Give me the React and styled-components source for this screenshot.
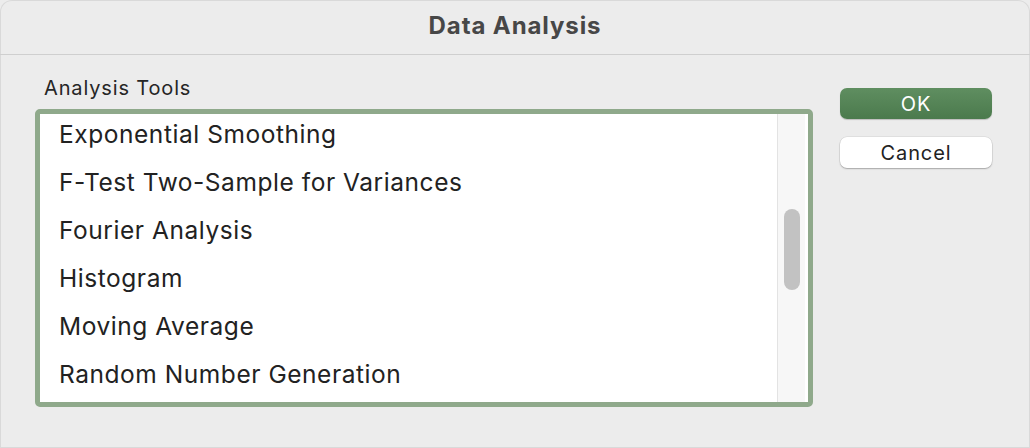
import React from "react";
import styled, { createGlobalStyle } from "styled-components";

const GlobalStyle = createGlobalStyle`
  html, body {
    margin: 0;
    padding: 0;
    background: #ececec;
  }
  body {
    font-family: Inter, "Noto Sans", "Liberation Sans", sans-serif;
  }
`;

const tools = [
  "Exponential Smoothing",
  "F-Test Two-Sample for Variances",
  "Fourier Analysis",
  "Histogram",
  "Moving Average",
  "Random Number Generation",
];

const App = () => {
  return (
    <>
      <GlobalStyle />
      <Window>
        <TitleBar>
          <h1>Data Analysis</h1>
        </TitleBar>
        <Body>
          <Left>
            <Label>Analysis Tools</Label>
            <ListBox>
              <Rows>
                {tools.map((item, index) => (
                  <Row key={index}>{item}</Row>
                ))}
              </Rows>
              <Track>
                <Thumb />
              </Track>
            </ListBox>
          </Left>
          <Buttons>
            <Button primary>OK</Button>
            <Button>Cancel</Button>
          </Buttons>
        </Body>
      </Window>
    </>
  );
};

const Window = styled.div`
  width: 1030px;
  height: 448px;
  box-sizing: border-box;
  background: #ececec;
  border-radius: 12px 12px 0 0;
  box-shadow: inset 0 0 0 1px rgba(0, 0, 0, 0.08);
  overflow: hidden;
`;

const TitleBar = styled.div`
  height: 54px;
  border-bottom: 1px solid #cfcfcf;
  display: flex;
  align-items: center;
  justify-content: center;
  h1 {
    margin: 0;
    margin-top: -4px;
    font-size: 24px;
    font-weight: 700;
    color: #474747;
    letter-spacing: 0.9px;
  }
`;

const Body = styled.div`
  display: flex;
  padding: 22px 0 0 35px;
  gap: 27px;
`;

const Left = styled.div`
  display: flex;
  flex-direction: column;
`;

const Label = styled.div`
  font-size: 20px;
  color: #262626;
  padding-left: 9px;
  height: 22px;
  line-height: 22px;
  letter-spacing: 0.85px;
`;

const ListBox = styled.div`
  margin-top: 10px;
  width: 778px;
  height: 298px;
  box-sizing: border-box;
  border: 5px solid #8fa98b;
  border-radius: 5px;
  background: #fff;
  display: flex;
  overflow: hidden;
`;

const Rows = styled.div`
  flex: 1;
  margin-top: -4px;
`;

const Row = styled.div`
  height: 48px;
  line-height: 48px;
  padding-left: 19px;
  font-size: 24.5px;
  letter-spacing: 0.55px;
  color: #222;
`;

const Track = styled.div`
  width: 28px;
  margin-right: 3px;
  box-sizing: border-box;
  border-left: 1px solid #e3e3e3;
  background: #f7f7f7;
  display: flex;
  justify-content: center;
  padding-top: 95px;
`;

const Thumb = styled.div`
  width: 16px;
  height: 81px;
  border-radius: 8px;
  background: #c2c2c2;
`;

const Buttons = styled.div`
  display: flex;
  flex-direction: column;
  gap: 18px;
  padding-top: 11px;
`;

const Button = styled.div`
  width: 152px;
  height: 31px;
  box-sizing: border-box;
  border-radius: 7px;
  display: flex;
  align-items: center;
  justify-content: center;
  font-size: 20px;
  letter-spacing: 0.9px;
  color: ${(p) => (p.primary ? "#fff" : "#222")};
  background: ${(p) =>
    p.primary ? "linear-gradient(#5f8e60, #4b7a4d)" : "#fff"};
  box-shadow: ${(p) =>
    p.primary
      ? "0 1px 1px rgba(0,0,0,0.2)"
      : "0 0 0 0.5px rgba(0,0,0,0.1), 0 1px 1.5px rgba(0,0,0,0.25)"};
`;

export default App;
